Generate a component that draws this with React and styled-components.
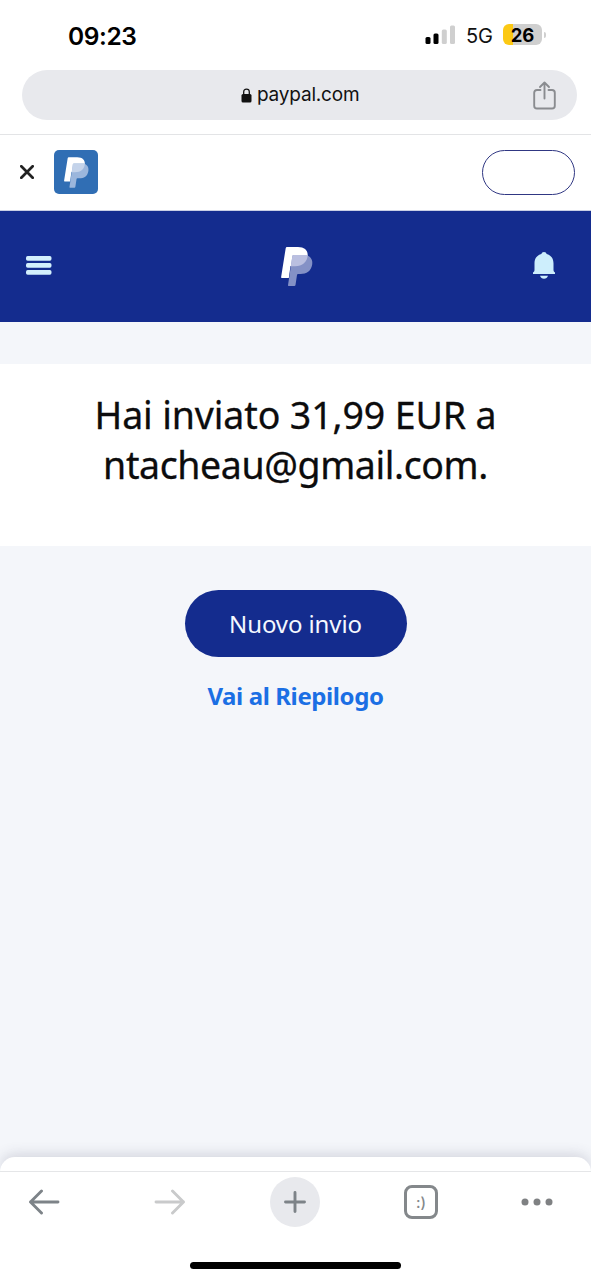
import React from 'react'
import styled, { createGlobalStyle } from "styled-components";

const GlobalStyle = createGlobalStyle`
    * {
      box-sizing: border-box;
    }
    body {
      margin: 0;
      background: #fff;
    }
    svg {
      display: block;
      flex: none;
    }
`;

const Screen = styled.div`
    width: 591px;
    height: 1280px;
    display: flex;
    flex-direction: column;
    overflow: hidden;
    background: #f4f6fa;
    font-family: "Noto Sans", sans-serif;
`;

const StatusBar = styled.div`
    height: 70px;
    padding: 0 45px 0 68px;
    display: flex;
    justify-content: space-between;
    align-items: center;
    background: #fff;
    font-family: Inter, sans-serif;
`;

const Clock = styled.span`
    margin-top: 2px;
    font-size: 24.5px;
    font-weight: 600;
    letter-spacing: -0.4px;
    color: #000;
`;

const StatusIcons = styled.div`
    display: flex;
    align-items: center;
`;

const Network = styled.span`
    width: 27px;
    margin: 2px 10px 0 10px;
    font-size: 20px;
    letter-spacing: -0.2px;
    color: #111;
`;

const Battery = styled.div`
    width: 39px;
    height: 21px;
    margin-top: -1px;
    border-radius: 6px;
    text-align: center;
    line-height: 22px;
    font-size: 18.5px;
    font-weight: 700;
    color: #000;
    background: linear-gradient(to right, #fcc914 10px, #cfcfcf 10px);
`;

const BatteryTip = styled.div`
    width: 2px;
    height: 6px;
    margin-left: 2px;
    border-radius: 0 2px 2px 0;
    background: #cfcfcf;
`;

const AddressArea = styled.div`
    height: 65px;
    padding: 0 14px 0 22px;
    background: #fff;
    border-bottom: 1px solid #e3e4e6;
`;

const AddressBar = styled.div`
    height: 50px;
    border-radius: 25px;
    padding: 0 21px 0 219px;
    display: flex;
    align-items: center;
    justify-content: space-between;
    background: #e8e9ed;
`;

const Domain = styled.div`
    display: flex;
    align-items: center;
    gap: 5px;
    font-family: Inter, sans-serif;
    font-size: 19px;
    color: #111;
    span {
      margin-top: -2px;
      letter-spacing: -0.2px;
    }
`;

const Banner = styled.div`
    height: 76px;
    padding: 0 16.5px 1px 20px;
    display: flex;
    align-items: center;
    background: #fff;
    border-bottom: 1px solid #c9cee4;
`;

const AppIcon = styled.div`
    width: 44px;
    height: 44px;
    margin: 0 auto 0 20px;
    padding-top: 1px;
    border-radius: 5px;
    display: flex;
    align-items: center;
    justify-content: center;
    background: #306eb4;
`;

const OpenButton = styled.button`
    width: 93px;
    height: 45px;
    border: 1.5px solid #303783;
    border-radius: 23px;
    background: #fff;
`;

const Header = styled.header`
    height: 111px;
    padding: 0 36px 2px 26px;
    display: grid;
    grid-template-columns: 255px 1fr auto;
    align-items: center;
    background: #142c8e;
    svg:nth-child(2) {
      margin-top: 2px;
    }
`;

const Message = styled.section`
    height: 182px;
    margin-top: 42px;
    padding-top: 26px;
    background: #fff;
    text-align: center;
`;

const Title = styled.h1`
    margin: 0;
    font-size: 37.5px;
    font-weight: 400;
    line-height: 49.5px;
    color: #0c0c0d;
    -webkit-text-stroke: 0.3px #0c0c0d;
`;

const TitleLine = styled.span`
    display: block;
    letter-spacing: ${(props) => props.$spacing};
`;

const Actions = styled.div`
    flex: 1;
    padding-top: 44px;
    display: flex;
    flex-direction: column;
    align-items: center;
`;

const PrimaryButton = styled.button`
    width: 222px;
    height: 67px;
    padding: 0;
    border: 0;
    border-radius: 34px;
    background: #142c8e;
    color: #f4f8ff;
    font-family: inherit;
    font-size: 24px;
    letter-spacing: -0.1px;
`;

const SummaryLink = styled.a`
    margin-top: 22px;
    font-size: 24px;
    line-height: 33px;
    font-weight: 700;
    letter-spacing: -0.4px;
    color: #1b6fe4;
`;

const Sheet = styled.div`
    height: 15px;
    border-radius: 16px 16px 0 0;
    background: #fff;
    border-bottom: 1px solid #e5e6e8;
    box-shadow: 0 -2px 14px rgba(60, 60, 90, 0.2);
`;

const BottomBar = styled.nav`
    height: 108px;
    padding: 5px 0 0;
    display: flex;
    flex-direction: column;
    background: #fff;
    position: relative;
`;

const Tools = styled.div`
    height: 50px;
    padding-left: 28px;
    display: flex;
    align-items: center;
    gap: 84px;
    svg:nth-child(2) {
      margin-left: 10px;
    }
    svg:last-child {
      margin-left: -1px;
    }
`;

const NewTab = styled.div`
    width: 50px;
    height: 50px;
    border-radius: 50%;
    display: flex;
    align-items: center;
    justify-content: center;
    background: #e8e9ed;
`;

const TabCount = styled.div`
    width: 34px;
    height: 34px;
    border: 3px solid #84888b;
    border-radius: 8px;
    display: flex;
    align-items: center;
    justify-content: center;
    padding-top: 1px;
    font-family: Inter, sans-serif;
    font-size: 15px;
    font-weight: 500;
    color: #84888b;
`;

const HomeIndicator = styled.div`
    width: 211px;
    height: 7px;
    margin: 35px auto 0 190px;
    border-radius: 4px;
    background: #000;
`;

function PayPalMark({ width, height, back, overlap }) {
  return (
    <svg width={width} height={height} viewBox="0 0 32 39">
      <path d="M6 0H17C23.5 0 27.3 3.6 26.6 9C25.7 15.5 21 19 14 19H9.5L7.8 31H.8Q0 31 .1 30.2L4.7 1.2Q4.9 0 6 0Z" fill="#fff"/>
      <path d="M12.6 8H25.5C29.8 9.5 32 13 31.2 17.5C30.1 24.3 25.6 27 19.5 27H17Q16.2 27 16 28L14.5 38Q14.3 39 13.3 39H7.6Q6.9 39 7 38.2L11.4 9Q11.6 8 12.6 8Z" fill={back}/>
      <path d="M12.6 8H26.7C26.3 15 21.5 19.2 14 19.2H9.8L11.4 9Q11.6 8 12.6 8Z" fill={overlap}/>
    </svg>
  )
}

export default function App() {
  return (
    <Screen>
      <GlobalStyle/>
      <StatusBar>
        <Clock>09:23</Clock>
        <StatusIcons>
          <svg width="31" height="20" viewBox="0 0 31 20">
            <rect x="0.5" y="12" width="5" height="7" rx="1.5" fill="#000"/>
            <rect x="8.5" y="8.5" width="5" height="10.5" rx="1.5" fill="#000"/>
            <rect x="16.8" y="4.5" width="5" height="14.5" rx="1.5" fill="#cfcfcf"/>
            <rect x="25" y="0.5" width="5" height="18.5" rx="1.5" fill="#cfcfcf"/>
          </svg>
          <Network>5G</Network>
          <Battery>26</Battery>
          <BatteryTip/>
        </StatusIcons>
      </StatusBar>

      <AddressArea>
        <AddressBar>
          <Domain>
            <svg width="11" height="15" viewBox="0 0 11 15">
              <rect x="0.5" y="6" width="10" height="8.5" rx="1.5" fill="#111"/>
              <path d="M2.7 7V4Q2.7 1.2 5.5 1.2T8.3 4V7" fill="none" stroke="#111" strokeWidth="1.3"/>
            </svg>
            <span>paypal.com</span>
          </Domain>
          <svg width="23" height="29" viewBox="0 0 23 29" fill="none" stroke="#8a8c90" strokeWidth="1.9" strokeLinecap="round" strokeLinejoin="round">
            <path d="M7.5 9H4Q1.2 9 1.2 11.8V24.7Q1.2 27.5 4 27.5H19Q21.8 27.5 21.8 24.7V11.8Q21.8 9 19 9H15.5"/>
            <path d="M11.5 17.5V1.5M7 6L11.5 1.5L16 6"/>
          </svg>
        </AddressBar>
      </AddressArea>

      <Banner>
        <svg width="14" height="14" viewBox="0 0 14 14" stroke="#222" strokeWidth="2.7" strokeLinecap="round">
          <path d="M1.3 1.3L12.7 12.7M12.7 1.3L1.3 12.7"/>
        </svg>
        <AppIcon>
          <PayPalMark width="25" height="31" back="#9bb6dc" overlap="#c4d3ea"/>
        </AppIcon>
        <OpenButton/>
      </Banner>

      <Header>
        <svg width="26" height="20" viewBox="0 0 26 20" fill="#d3f0fd">
          <rect x="0" y="0" width="25.5" height="4.8" rx="1.7"/>
          <rect x="0" y="7" width="25.5" height="4.8" rx="1.7"/>
          <rect x="0" y="14" width="25.5" height="4.8" rx="1.7"/>
        </svg>
        <PayPalMark width="32" height="39" back="#8491c6" overlap="#babfe0"/>
        <svg width="22" height="27" viewBox="0 0 22 28" fill="#cdeefc" preserveAspectRatio="none">
          <path d="M11 0Q13.2 0 13.7 2.2C18.5 3.6 20.5 7.3 20.5 12V19Q20.5 20.4 22 21.2V22.8H0V21.2Q1.5 20.4 1.5 19V12C1.5 7.3 3.5 3.6 8.3 2.2Q8.8 0 11 0Z"/>
          <path d="M7 24.6H15Q14 27.7 11 27.7T7 24.6Z"/>
        </svg>
      </Header>

      <Message>
        <Title>
          <TitleLine $spacing="-0.12px">Hai inviato 31,99 EUR a</TitleLine>
          <TitleLine $spacing="-0.4px">ntacheau@gmail.com.</TitleLine>
        </Title>
      </Message>

      <Actions>
        <PrimaryButton>Nuovo invio</PrimaryButton>
        <SummaryLink>Vai al Riepilogo</SummaryLink>
      </Actions>

      <Sheet/>
      <BottomBar>
        <Tools>
          <svg width="32" height="26" viewBox="0 0 32 26" fill="none" stroke="#7d8388" strokeWidth="2.9" strokeLinecap="round" strokeLinejoin="round">
            <path d="M30 13H2.5M13.5 2L2.5 13L13.5 24"/>
          </svg>
          <svg width="32" height="26" viewBox="0 0 32 26" fill="none" stroke="#c9cacb" strokeWidth="2.9" strokeLinecap="round" strokeLinejoin="round">
            <path d="M2 13H29.5M18.5 2L29.5 13L18.5 24"/>
          </svg>
          <NewTab>
            <svg width="22" height="22" viewBox="0 0 22 22" stroke="#7d8388" strokeWidth="2.9" strokeLinecap="round">
              <path d="M11 1.5V20.5M1.5 11H20.5"/>
            </svg>
          </NewTab>
          <TabCount>:)</TabCount>
          <svg width="32" height="8" viewBox="0 0 32 8" fill="#7f8183">
            <circle cx="4" cy="4" r="3.5"/>
            <circle cx="16" cy="4" r="3.5"/>
            <circle cx="28" cy="4" r="3.5"/>
          </svg>
        </Tools>
        <HomeIndicator/>
      </BottomBar>
    </Screen>
  )
}
